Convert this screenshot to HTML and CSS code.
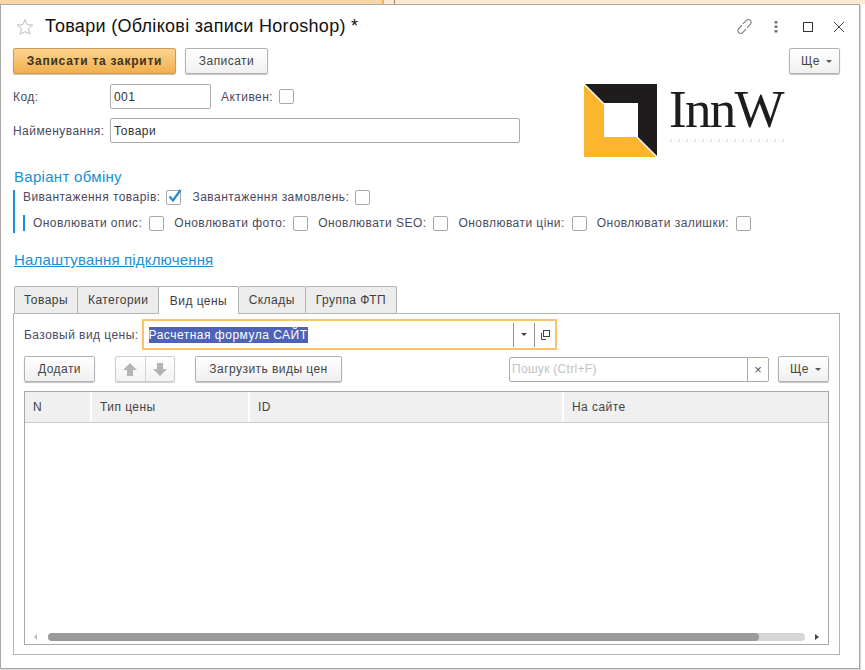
FILE: index.html
```html
<!DOCTYPE html>
<html lang="uk">
<head>
<meta charset="utf-8">
<title>Товари</title>
<link rel="stylesheet" href="styles.css">
</head>
<body>
<div class="strip"><span class="strip-left"></span><span class="strip-right"><i class="strip-tick"></i></span></div>
<main class="window">
  <header class="titlebar">
    <svg class="star" width="18" height="18" viewBox="0 0 18 18"><path d="M9 1.500l2.200 5.100 5.500.5-4.200 3.600 1.300 5.400L9 13.700l-4.800 2.400 1.300-5.400L1.300 7.100l5.500-.5z" fill="#fff" stroke="#bdbdbd"/></svg>
    <h1 class="title">Товари (Облікові записи Horoshop) *</h1>
    <div class="win-icons">
      <svg class="ic-link" width="17" height="17" viewBox="0 0 16 16" fill="none" stroke="#777" stroke-width="1"><path d="M6.500 5.500L9.800 2.200a2.400 2.400 0 0 1 3.600 0.100 2.400 2.400 0 0 1 .2 3.500L10.500 9"/><path d="M9.500 10.500L6.200 13.800a2.400 2.400 0 0 1-3.600-.1 2.400 2.400 0 0 1-.2-3.500L5.500 7"/></svg>
      <svg class="ic-dots" width="4" height="12" viewBox="0 0 4 12" fill="#777"><rect x="0.500" y="0" width="3" height="2.500"/><rect x="0.500" y="4.500" width="3" height="2.500"/><rect x="0.500" y="9" width="3" height="2.500"/></svg>
      <span class="maximize"></span>
      <svg width="12" height="12" viewBox="0 0 12 12" stroke="#444" stroke-width="1"><path d="M1 1l10 10M11 1L1 11"/></svg>
    </div>
  </header>

  <div class="toolbar">
    <button class="btn primary">Записати та закрити</button>
    <button class="btn save">Записати</button>
    <button class="btn more push">Ще<i class="caret"></i></button>
  </div>

  <div class="head-area">
    <div class="head-fields">
      <div class="row code-row">
        <label class="lbl name-lbl">Код:</label>
        <div class="input code-input">001</div>
        <label class="lbl active-lbl">Активен:</label>
        <span class="check"></span>
      </div>
      <div class="row name-row">
        <label class="lbl name-lbl">Найменування:</label>
        <div class="input name-input">Товари</div>
      </div>
    </div>
    <div class="logo">
      <svg class="logo-mark" width="74" height="75" viewBox="0 0 74 75">
        <path d="M0 1h73v73z" fill="#1e1c1c"/>
        <path d="M0 1v73h73z" fill="#fbb52e"/>
        <path d="M0 1L73 74" stroke="#fff" stroke-width="1.500"/>
        <rect x="20" y="20" width="34" height="34" fill="#fff"/>
      </svg>
      <div class="logo-text">
        <span class="logo-name">InnW</span>
        <span class="logo-tag"></span>
      </div>
    </div>
  </div>

  <h2 class="section">Варіант обміну</h2>
  <div class="group">
    <div class="row opts-1">
      <label class="lbl">Вивантаження товарів:</label>
      <span class="check checked"><svg width="16" height="16" viewBox="0 0 16 16" fill="none" stroke="#1a8fd1" stroke-width="2.200"><path d="M3.500 7.500L7 11.500 14.500 1"/></svg></span>
      <label class="lbl gap-l">Завантаження замовлень:</label>
      <span class="check"></span>
    </div>
    <div class="subgroup">
      <label class="lbl">Оновлювати опис:</label><span class="check"></span>
      <label class="lbl">Оновлювати фото:</label><span class="check"></span>
      <label class="lbl">Оновлювати SEO:</label><span class="check"></span>
      <label class="lbl">Оновлювати ціни:</label><span class="check"></span>
      <label class="lbl">Оновлювати залишки:</label><span class="check"></span>
    </div>
  </div>

  <a class="link" href="#">Налаштування підключення</a>

  <nav class="tabs">
    <span class="tab">Товары</span>
    <span class="tab">Категории</span>
    <span class="tab active">Вид цены</span>
    <span class="tab">Склады</span>
    <span class="tab">Группа ФТП</span>
  </nav>

  <section class="panel">
    <div class="row base-row">
      <label class="lbl">Базовый вид цены:</label>
      <div class="focus-field">
        <span class="selected">Расчетная формула САЙТ</span>
        <span class="field-btn"><i class="caret dark"></i></span>
        <span class="field-btn"><svg width="10" height="10" viewBox="0 0 10 10" fill="none" stroke="#444"><rect x="3.500" y="0.500" width="6" height="6"/><path d="M1.500 3v6.500H6"/></svg></span>
      </div>
    </div>

    <div class="table-bar">
      <button class="btn add">Додати</button>
      <div class="btn-pair">
        <span class="arrow"><svg width="14" height="13" viewBox="0 0 14 13" fill="#b4b4b4"><path d="M7 0l7 7H10v6H4V7H0z"/></svg></span>
        <span class="arrow"><svg width="14" height="13" viewBox="0 0 14 13" fill="#b4b4b4"><path d="M7 13L0 6h4V0h6v6h4z"/></svg></span>
      </div>
      <button class="btn load">Загрузить виды цен</button>
      <div class="search push">
        <span class="search-text">Пошук (Ctrl+F)</span>
        <span class="search-clear">×</span>
      </div>
      <button class="btn more2">Ще<i class="caret"></i></button>
    </div>

    <div class="table">
      <div class="thead">
        <span class="th c1">N</span>
        <span class="th c2">Тип цены</span>
        <span class="th c3">ID</span>
        <span class="th c4">На сайте</span>
      </div>
      <div class="tbody"></div>
      <div class="hscroll">
        <i class="sc-left"></i>
        <div class="track"><div class="thumb"></div></div>
        <i class="sc-right"></i>
      </div>
    </div>
  </section>
</main>
</body>
</html>
```
FILE: styles.css
```css
* { box-sizing: border-box; }
html, body { margin: 0; padding: 0; }
body {
  width: 865px; height: 670px; overflow: hidden; background: #fff;
  font-family: "Liberation Sans", Arial, sans-serif; font-size: 12px; color: #4b4b4b;
}
.strip { height: 4px; display: flex; }
.strip-left { width: 384px; background: #f8d6a6; border-right: 2px solid #eeb060; flex: none; }
.strip-right { flex: 1; background: #fbe9d3; padding-left: 10px; }
.strip-tick { display: block; width: 1px; height: 4px; background: #a08060; }
.window {
  width: 860px; height: 665px; background: #fff;
  border: 1px solid #a8a8a8;
  display: flex; flex-direction: column; box-shadow: 1px 1px 1px #d8d8d8;
}
.titlebar { height: 43px; flex: none; display: flex; align-items: center; padding: 0 0 0 15px; }
.star { flex: none; margin-top: 1px; }
.title { margin: 0 0 0 11px; font-size: 18px; font-weight: 400; color: #111; white-space: nowrap; letter-spacing: .3px; }
.win-icons { margin-left: auto; display: flex; align-items: center; padding-right: 14px; }
.ic-link { margin-right: 21px; }
.ic-dots { margin-right: 25px; }
.maximize { width: 10px; height: 10px; border: 1.500px solid #333; margin-right: 20px; }
.toolbar { display: flex; gap: 9px; padding: 0 19px 0 12px; flex: none; }
.push { margin-left: auto; }
.btn {
  height: 26px; padding: 0 13px; font: 12px "Liberation Sans", Arial, sans-serif; letter-spacing: .45px;
  color: #444; background: linear-gradient(#fff, #f0f0f0); border: 1px solid #b2b2b2;
  border-radius: 2px; box-shadow: 0 1px 1px #c4c4c4; white-space: nowrap;
  display: inline-flex; align-items: center; justify-content: center; flex: none;
}
.primary {
  width: 163px; font-weight: 700; color: #3c3320; background: linear-gradient(#fcd58f, #f2ae4e);
  border-color: #c99a58; letter-spacing: .75px;
}
.save { width: 83px; }
.more { width: 51px; padding: 0 0 0 4px; }
.caret {
  display: inline-block; width: 0; height: 0; margin-left: 6px;
  border-left: 3px solid transparent; border-right: 3px solid transparent; border-top: 3px solid #555;
}
.head-area { display: flex; flex: none; height: 90px; padding: 0 0 0 12px; }
.head-fields { width: 507px; flex: none; padding-top: 10px; }
.row { display: flex; align-items: center; }
.lbl { color: #4a4a60; white-space: nowrap; letter-spacing: .45px; }
.name-lbl { width: 97px; flex: none; }
.input {
  height: 25px; border: 1px solid #aaa; border-radius: 2px; padding: 0 3px;
  display: flex; align-items: center; color: #333; letter-spacing: .45px; background: #fff;
}
.code-row { height: 25px; }
.code-input { width: 101px; }
.active-lbl { margin-left: 10px; }
.name-row { margin-top: 9px; height: 25px; }
.name-input { width: 410px; }
.check {
  width: 15px; height: 15px; border: 1px solid #a8a8a8; border-radius: 2px; margin-left: 6px; flex: none;
  position: relative; background: #fff;
}
.check svg { position: absolute; left: -1px; top: -2px; }
.logo { display: flex; margin-left: 64px; padding-top: 9px; align-items: flex-start; }
.logo-mark { flex: none; }
.logo-text { display: flex; flex-direction: column; margin-left: 12px; padding-top: 2px; }
.logo-name { font: 53px/48px "Liberation Serif", "Times New Roman", serif; color: #1e1c1c; letter-spacing: -1.700px; margin-left: -1px; }
.logo-tag {
  height: 3px; width: 115px; margin-top: 6px; opacity: .55;
  background: repeating-linear-gradient(90deg, #d4d4d4 0 2px, #fff 2px 4px, #e4e4e4 4px 5px, #fff 5px 8px);
}
.section {
  margin: 4px 0 0 13px; font-size: 15px; line-height: 18px; font-weight: 400; color: #1a8fd1; letter-spacing: .3px; flex: none;
}
.group { margin: 4px 0 0 12px; border-left: 2px solid #1a8fd1; height: 43px; padding-left: 8px; flex: none; }
.opts-1 { height: 16px; margin-top: -1px; }
.opts-1 .check { margin-left: 5px; }
.opts-1 .gap-l { margin-left: 12px; }
.opts-1 .gap-l + .check { margin-left: 6px; }
.subgroup {
  display: flex; align-items: center; height: 16px; margin-top: 10px; border-left: 2px solid #1a8fd1;
  padding-left: 8px; width: 740px;
}
.subgroup .check { margin: 0 10px 0 7px; }
.link { margin: 18px 0 0 13px; font-size: 15px; line-height: 18px; color: #1a8fd1; align-self: flex-start; flex: none; letter-spacing: .17px; }
.tabs { display: flex; margin: 17px 0 0 13px; height: 27px; flex: none; position: relative; z-index: 1; }
.tab {
  height: 27px; padding: 0 10px; display: flex; align-items: center; letter-spacing: .45px; color: #3e3e3e;
  background: #ececec; border: 1px solid #b4b4b4; border-bottom: none; border-left: none; border-radius: 2px 2px 0 0;
}
.tab:first-child { border-left: 1px solid #b4b4b4; padding: 0 9px; }
.tab:last-child { padding: 0 10px; }
.tab.active { background: #fff; height: 28px; border-left: 1px solid #b4b4b4; margin-left: -1px; padding: 0 10.500px; }
.panel {
  width: 827px; height: 342px; margin-left: 12px; border: 1px solid #b4b4b4; padding: 5px 10px 0 10px; flex: none;
}
.base-row { height: 31px; }
.focus-field {
  width: 415px; height: 31px; margin-left: 3px; border: 2px solid #fbc26a; display: flex; align-items: center; padding-left: 5px;
}
.selected { background: #4f63b6; color: #fff; letter-spacing: .5px; line-height: 16px; margin-right: auto; white-space: nowrap; }
.field-btn { width: 21px; height: 24px; border-left: 1px solid #8f8f8f; display: flex; align-items: center; justify-content: center; }
.field-btn .dark { margin: 0; border-top-color: #444; }
.table-bar { display: flex; align-items: center; margin-top: 6px; height: 26px; }
.add { width: 71px; }
.btn-pair {
  display: flex; margin-left: 20px; width: 60px; height: 26px; border: 1px solid #cdcdcd; border-radius: 2px;
  background: linear-gradient(#fff, #f2f2f2); box-shadow: 0 1px 1px #d0d0d0;
}
.arrow { flex: 1; display: flex; align-items: center; justify-content: center; }
.arrow + .arrow { border-left: 1px solid #d4d4d4; }
.load { width: 147px; margin-left: 20px; padding: 0; }
.search { width: 260px; height: 25px; border: 1px solid #aaa; border-radius: 2px; display: flex; align-items: center; }
.search-text { flex: 1; color: #c2c2c2; padding-left: 2px; letter-spacing: .3px; }
.search-clear { width: 21px; height: 23px; border-left: 1px solid #aaa; display: flex; align-items: center; justify-content: center; color: #555; font-size: 13px; }
.more2 { width: 51px; margin-left: 9px; padding: 0 0 0 4px; }
.table {
  margin-top: 9px; height: 254px; border: 1px solid #a8a8a8; display: flex; flex-direction: column;
}
.thead { display: flex; height: 31px; background: #f0f0f0; border-bottom: 1px solid #c8c8c8; flex: none; }
.th { display: flex; align-items: center; padding-left: 8px; border-right: 2px solid #fff; color: #444; letter-spacing: .45px; flex: none; }
.c1 { width: 67px; }
.c2 { width: 158px; }
.c3 { width: 314px; }
.c4 { flex: 1; border-right: none; }
.tbody { flex: 1; }
.hscroll { display: flex; align-items: center; height: 9px; margin-bottom: 3px; flex: none; padding: 0 10px 0 9px; }
.track { width: 757px; height: 8px; margin-left: 11px; background: #d6d6d6; border-radius: 4px; flex: none; }
.thumb { width: 711px; height: 8px; background: #999; border-radius: 4px; }
.sc-left { width: 0; height: 0; border-top: 3px solid transparent; border-bottom: 3px solid transparent; border-right: 3px solid #bbb; }
.sc-right { width: 0; height: 0; margin-left: 10px; border-top: 3px solid transparent; border-bottom: 3px solid transparent; border-left: 4px solid #444; }
```
